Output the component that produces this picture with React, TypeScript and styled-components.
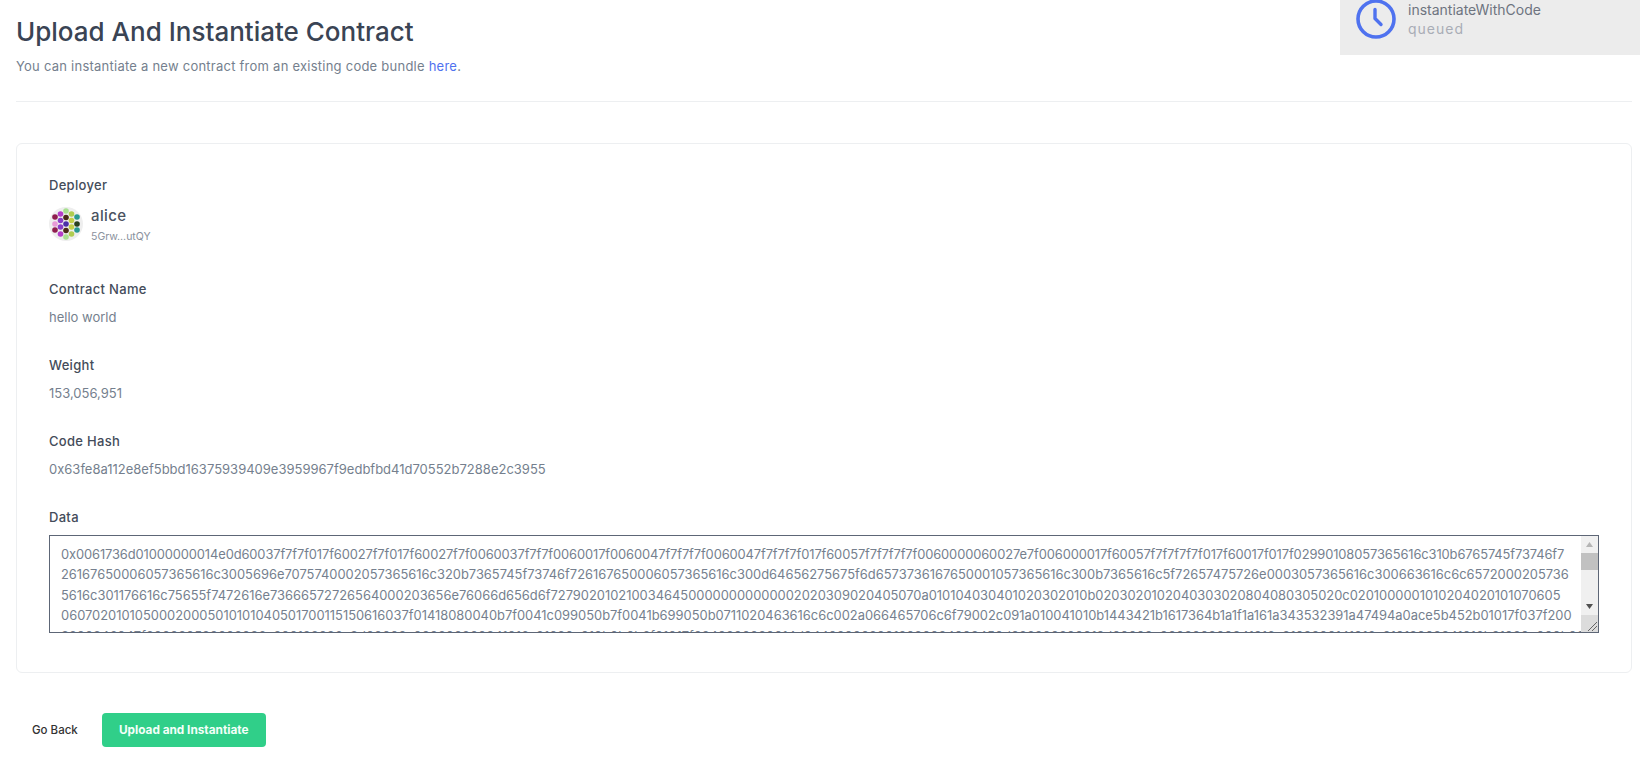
import React from "react";
import styled, { createGlobalStyle } from "styled-components";

const Global = createGlobalStyle`
  html, body { margin: 0; padding: 0; background: #fff; overflow: hidden; }
  body { font-family: "Inter", "Liberation Sans", sans-serif; }
  * { box-sizing: border-box; }
`;

const Page = styled.div`
  width: 1640px;
  height: 759px;
  padding: 0 8px 0 16px;
  overflow: hidden;
  display: flex;
  flex-direction: column;
`;

const Header = styled.header`
  height: 102px;
  padding-top: 15px;
  border-bottom: 1px solid #edeff1;
`;

const Title = styled.h1`
  margin: 0;
  font-family: "Inter", sans-serif;
  font-size: 26px;
  line-height: 34px;
  font-weight: 500;
  color: #3a4454;
`;

const Subtitle = styled.p`
  margin: 8px 0 0;
  font-size: 13px;
  line-height: 18px;
  letter-spacing: 0.24px;
  color: #757f8e;
`;

const Link = styled.a`
  color: #4f72ef;
`;

const Toast = styled.div`
  position: absolute;
  top: 0;
  right: 0;
  width: 300px;
  height: 55px;
  background: #ececec;
  display: flex;
  gap: 12px;
  padding-left: 16px;
`;

const ToastIcon = styled.svg`
  width: 40px;
  height: 40px;
  margin-top: -1px;
  flex: none;
`;

const ToastText = styled.div`
  font-size: 14px;
  line-height: 19px;
  color: #6e7480;
`;

const ToastStatus = styled.div`
  color: #a9adb6;
  letter-spacing: 1px;
`;

const Card = styled.section`
  margin-top: 41px;
  height: 530px;
  border: 1px solid #edeff1;
  border-radius: 6px;
  padding: 32px 32px 0;
`;

const Field = styled.div<{ $gap?: number }>`
  margin-bottom: ${(p) => p.$gap ?? 30}px;
`;

const Label = styled.div<{ $gap?: number }>`
  font-size: 13px;
  line-height: 18px;
  font-weight: 500;
  letter-spacing: 0.3px;
  color: #444c5a;
  margin-bottom: ${(p) => p.$gap ?? 10}px;
`;

const Value = styled.div`
  font-size: 13px;
  line-height: 18px;
  color: #757f8e;
`;

const Account = styled.div`
  display: flex;
  align-items: flex-start;
  gap: 8px;
`;

const AccountText = styled.div`
  margin-top: -1px;
`;

const AccountName = styled.div`
  font-size: 15px;
  line-height: 20px;
  font-weight: 500;
  letter-spacing: 0.4px;
  color: #4a5260;
`;

const AccountAddr = styled.div`
  margin-top: 3px;
  font-size: 10.5px;
  line-height: 16px;
  color: #8a919d;
`;

const DataWrap = styled.div`
  position: relative;
  width: 1550px;
  height: 98px;
`;

const DataArea = styled.div`
  width: 100%;
  height: 100%;
  padding: 9px 11px;
  border: 1px solid #5d6676;
  font-family: "Inter", sans-serif;
  font-size: 12.9px;
  line-height: 20.4px;
  color: #757f8e;
  overflow: hidden;
`;

const DataLine = styled.div<{ $spacing?: number }>`
  white-space: pre;
  letter-spacing: ${(p) => p.$spacing ?? 0}px;
`;

const ScrollBar = styled.div`
  position: absolute;
  top: 1px;
  right: 1px;
  bottom: 1px;
  width: 17px;
  background: #f0f0f0;
  display: flex;
  flex-direction: column;
`;

const ScrollButton = styled.svg`
  display: block;
  width: 17px;
  height: 17px;
  flex: none;
`;

const ScrollThumb = styled.div`
  height: 17px;
  flex: none;
  background: #c1c1c1;
`;

const ScrollSpace = styled.div`
  flex: 1;
`;

const Resizer = styled.svg`
  display: block;
  width: 17px;
  height: 17px;
  flex: none;
  background: #dcdcdc;
`;

const Actions = styled.div`
  display: flex;
  align-items: center;
  margin-top: 40px;
  padding-left: 16px;
  gap: 24px;
`;

const BackButton = styled.button`
  border: 0;
  background: none;
  padding: 0;
  font: 500 11.5px "Inter", sans-serif;
  color: #333;
`;

const PrimaryButton = styled.button`
  width: 164px;
  height: 34px;
  border: 0;
  border-radius: 4px;
  background: #30cf89;
  color: #f4fff9;
  font: 700 11.8px "Inter", sans-serif;
`;

const dots: [number, number, string][] = [
  [-11, -7, "#8f1d4f"], [-11, 0, "#e79ad8"], [-11, 6, "#8f1d4f"],
  [-5.5, -10, "#b43ec8"], [-5.5, -3.5, "#8a3dc8"], [-5.5, 3, "#8a3dc8"], [-5.5, 10, "#b43ec8"],
  [0, -13, "#a8e090"], [0, -6.5, "#4a2a18"], [0, 0, "#4b2fa8"], [0, 6.5, "#4a2a18"], [0, 13, "#a8e090"],
  [5.5, -10, "#b0cc50"], [5.5, -3.5, "#c4cf48"], [5.5, 3, "#c4cf48"], [5.5, 10, "#b0cc50"],
  [11, -7, "#2a9a90"], [11, 0, "#2a4020"], [11, 6, "#2a9a90"],
];

const Avatar = () => (
  <svg width="34" height="34" viewBox="-17 -17 34 34">
    <circle r="17" fill="#eeeeee" />
    {dots.map(([x, y, c], i) => (
      <circle key={i} cx={x} cy={y} r="2.8" fill={c} />
    ))}
  </svg>
);

const DATA: { text: string; spacing?: number }[] = [
  { text: "0x0061736d01000000014e0d60037f7f7f017f60027f7f017f60027f7f0060037f7f7f0060017f0060047f7f7f7f0060047f7f7f7f017f60057f7f7f7f7f0060000060027e7f006000017f60057f7f7f7f7f017f60017f017f02990108057365616c310b6765745f73746f7", spacing: -0.107 },
  { text: "26167650006057365616c3005696e7075740002057365616c320b7365745f73746f726167650006057365616c300d64656275675f6d6573736167650001057365616c300b7365616c5f72657475726e0003057365616c300663616c6c6572000205736" },
  { text: "5616c301176616c75655f7472616e73666572726564000203656e76066d656d6f72790201021003464500000000000002020309020405070a010104030401020302010b0203020102040303020804080305020c0201000001010204020101070605" },
  { text: "06070201010500020005010101040501700115150616037f01418080040b7f0041c099050b7f0041b699050b0711020463616c6c002a066465706c6f79002c091a010041010b1443421b1617364b1a1f1a161a343532391a47494a0ace5b452b01017f037f200" },
  { text: "3200346047f200020520002036a200128036c3d00002a000200200341016a21020c010b0b0b6f01017f0240200020014d0440200020012020024003450d022200200012d00002a000200200341016a2102200141016a21012002341016b21020c000b000b20" },
];

export default function App() {
  return (
    <Page>
      <Global />
      <Toast>
        <ToastIcon viewBox="0 0 40 40" fill="none" stroke="#4f72ef" strokeLinecap="round" strokeLinejoin="round">
          <circle cx="20" cy="20" r="18" strokeWidth="3.6" />
          <path d="M19 10.5 V19.5 L25 25.5" strokeWidth="3.4" />
        </ToastIcon>
        <ToastText>
          instantiateWithCode
          <ToastStatus>queued</ToastStatus>
        </ToastText>
      </Toast>
      <Header>
        <Title>Upload And Instantiate Contract</Title>
        <Subtitle>
          You can instantiate a new contract from an existing code bundle <Link>here</Link>.
        </Subtitle>
      </Header>
      <Card>
        <Field $gap={35}>
          <Label $gap={13}>Deployer</Label>
          <Account>
            <Avatar />
            <AccountText>
              <AccountName>alice</AccountName>
              <AccountAddr>5Grw…utQY</AccountAddr>
            </AccountText>
          </Account>
        </Field>
        <Field>
          <Label>Contract Name</Label>
          <Value>hello world</Value>
        </Field>
        <Field>
          <Label>Weight</Label>
          <Value>153,056,951</Value>
        </Field>
        <Field>
          <Label>Code Hash</Label>
          <Value>0x63fe8a112e8ef5bbd16375939409e3959967f9edbfbd41d70552b7288e2c3955</Value>
        </Field>
        <Field>
          <Label $gap={9}>Data</Label>
          <DataWrap>
            <DataArea>
              {DATA.map((line, i) => (
                <DataLine key={i} $spacing={line.spacing}>{line.text}</DataLine>
              ))}
            </DataArea>
            <ScrollBar>
              <ScrollButton viewBox="0 0 17 17"><path d="M8.5 6 L12 11 H5 Z" fill="#b5b5b5" /></ScrollButton>
              <ScrollThumb />
              <ScrollSpace />
              <ScrollButton viewBox="0 0 17 17"><path d="M8.5 11 L12 6 H5 Z" fill="#505050" /></ScrollButton>
              <Resizer viewBox="0 0 17 17"><path d="M7 16 L16 7 M11 16 L16 11" stroke="#666" fill="none" /></Resizer>
            </ScrollBar>
          </DataWrap>
        </Field>
      </Card>
      <Actions>
        <BackButton>Go Back</BackButton>
        <PrimaryButton>Upload and Instantiate</PrimaryButton>
      </Actions>
    </Page>
  );
}
